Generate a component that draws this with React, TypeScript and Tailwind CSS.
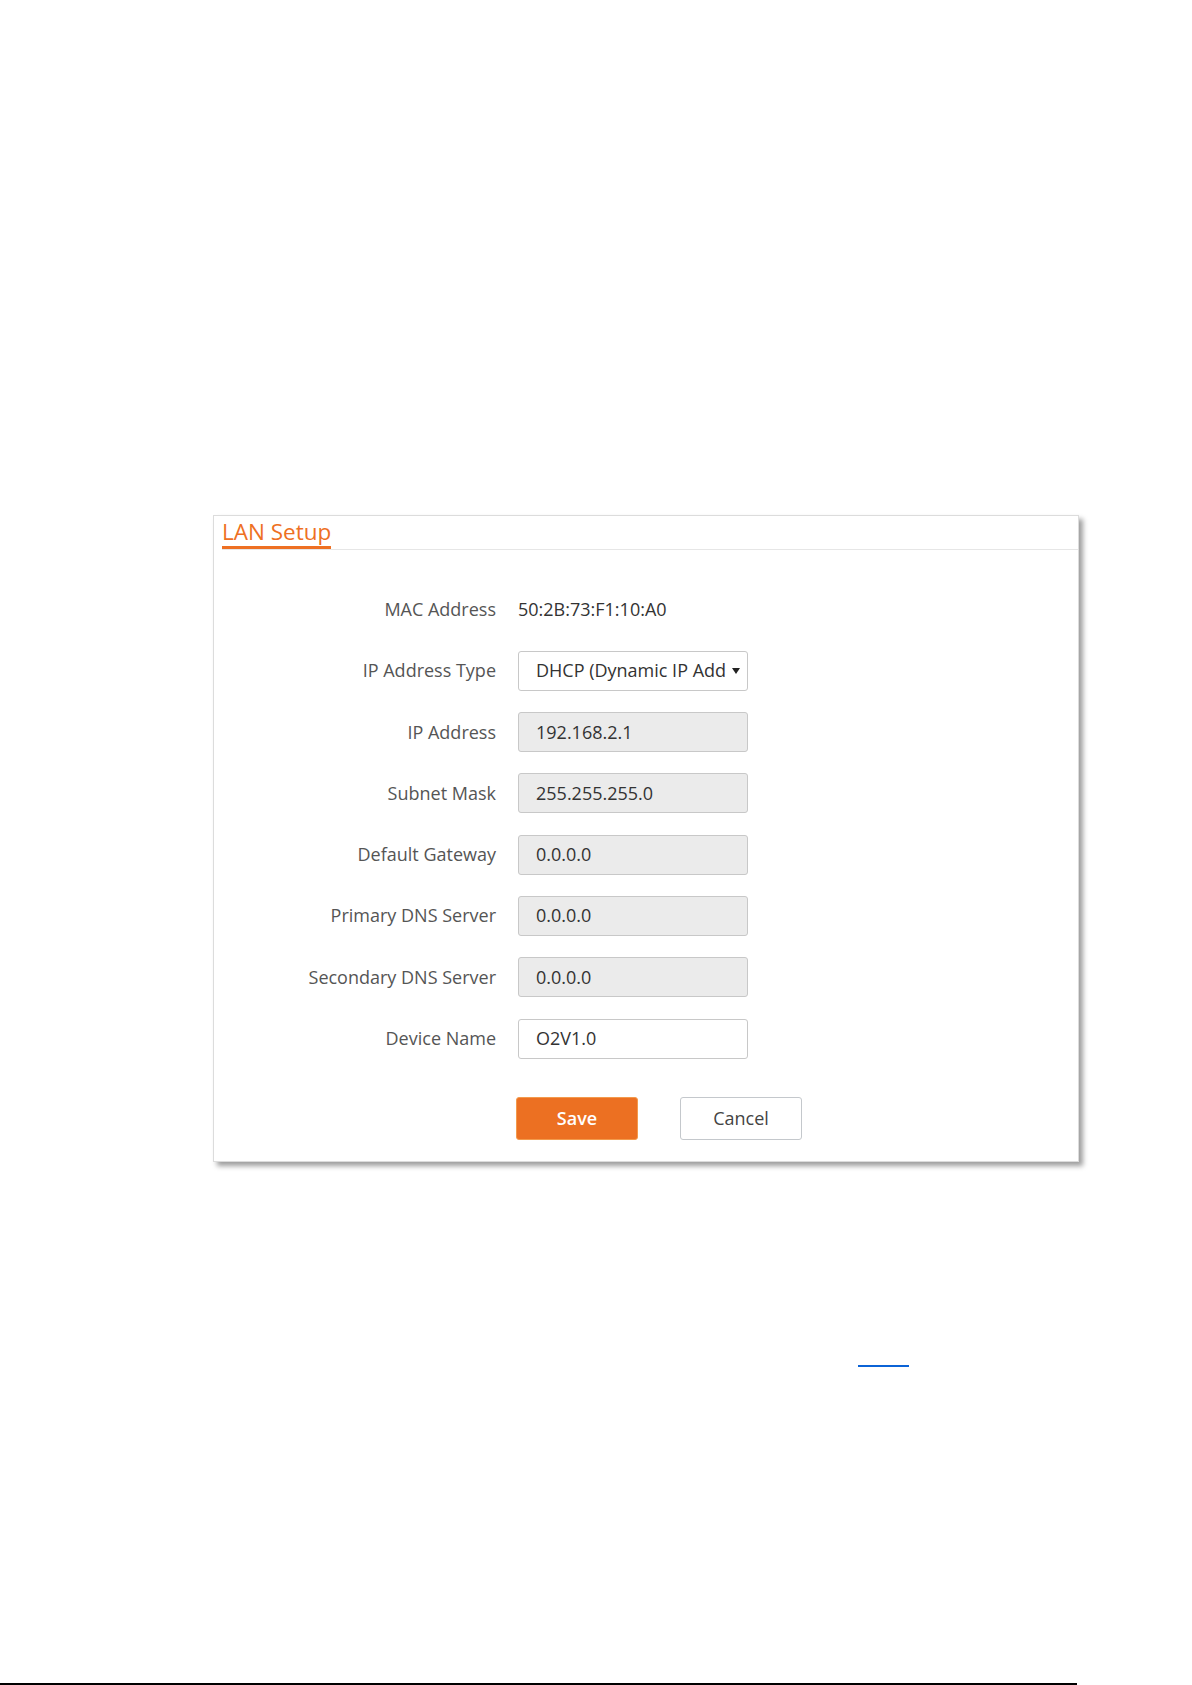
import React from "react";

type Row = { label: string; value: string; kind: "text" | "select" | "disabled" | "input" };

const rows: Row[] = [
  { label: "MAC Address", value: "50:2B:73:F1:10:A0", kind: "text" },
  { label: "IP Address Type", value: "DHCP (Dynamic IP Add", kind: "select" },
  { label: "IP Address", value: "192.168.2.1", kind: "disabled" },
  { label: "Subnet Mask", value: "255.255.255.0", kind: "disabled" },
  { label: "Default Gateway", value: "0.0.0.0", kind: "disabled" },
  { label: "Primary DNS Server", value: "0.0.0.0", kind: "disabled" },
  { label: "Secondary DNS Server", value: "0.0.0.0", kind: "disabled" },
  { label: "Device Name", value: "O2V1.0", kind: "input" },
];

function Field({ row }: { row: Row }) {
  if (row.kind === "text") {
    return <div className="ml-[22px] text-[#333]">{row.value}</div>;
  }
  if (row.kind === "select") {
    return (
      <div className="ml-[22px] flex h-10 w-[230px] items-center justify-between rounded-[3px] border border-[#c8c8c8] bg-white pl-[17px] pr-[3px]">
        <div className="whitespace-nowrap text-[#333]">{row.value}</div>
        <svg width="12" height="10" viewBox="0 0 12 10" className="mr-[2px] shrink-0">
          <path d="M2 2 L10 2 L6 8 Z" fill="#222" />
        </svg>
      </div>
    );
  }
  const bg = row.kind === "disabled" ? "bg-[#ebebeb]" : "bg-white";
  return (
    <div
      className={`ml-[22px] flex h-10 w-[230px] items-center rounded-[3px] border border-[#c8c8c8] pl-[17px] text-[#333] ${bg}`}
    >
      {row.value}
    </div>
  );
}

export default function App() {
  return (
    <div className="relative flex h-[1685px] w-[1192px] flex-col bg-white font-['Open_Sans',sans-serif] text-[18px]">
      <div className="pl-[213px] pt-[515px]">
        <div className="w-[866px] border border-[#dcdcdc] bg-white shadow-[4px_4px_5px_rgba(0,0,0,0.38)]">
          <div className="ml-[8px] flex border-b border-[#e6e6e6] pt-[2px]">
            <span className="border-b-[3.5px] border-[#ee7023] text-[22.5px] leading-[28px] text-[#ee7023]">
              LAN Setup
            </span>
          </div>
          <div className="mt-[39.5px] flex flex-col gap-[21.3px]">
            {rows.map((r) => (
              <div key={r.label} className="flex h-10 items-center">
                <div className="w-[282px] text-right text-[#555]">{r.label}</div>
                <Field row={r} />
              </div>
            ))}
          </div>
          <div className="mt-[38.5px] flex gap-[42px] pb-[21px] pl-[302px]">
            <div className="flex h-[43px] w-[122px] items-center justify-center rounded-[3px] border border-[#f39a4c] bg-[#ec7022] font-semibold text-white">
              Save
            </div>
            <div className="flex h-[43px] w-[122px] items-center justify-center rounded-[3px] border border-[#c4c8cc] bg-white text-[#444]">
              Cancel
            </div>
          </div>
        </div>
      </div>
      <div className="ml-[858px] mt-[203px] h-[2px] w-[51px] bg-[#0b63d6]" />
      <div className="mt-[316px] h-[2px] w-[1077px] bg-black" />
    </div>
  );
}
